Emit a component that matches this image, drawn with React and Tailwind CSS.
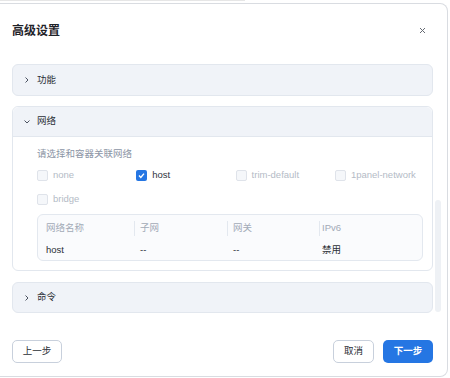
import React from "react";

const font = { fontFamily: '"Liberation Sans","Noto Sans CJK SC",sans-serif' };

function ChevronRight() {
  return (
    <svg width="6" height="8" viewBox="0 0 6 8" className="shrink-0">
      <polyline points="1.5,1.5 4,4 1.5,6.5" fill="none" stroke="#4b5260" strokeWidth="1" />
    </svg>
  );
}
function ChevronDown() {
  return (
    <svg width="8" height="6" viewBox="0 0 8 6" className="shrink-0">
      <polyline points="1.5,1.5 4,4 6.5,1.5" fill="none" stroke="#4b5260" strokeWidth="1" />
    </svg>
  );
}

function Check({ label, checked }) {
  return (
    <div className="w-[99.3px] flex items-center gap-[5px] h-[16px]">
      {checked ? (
        <div className="w-[11px] h-[11px] rounded-[2px] bg-[#2576e3] flex items-center justify-center">
          <svg width="9" height="9" viewBox="0 0 9 9">
            <polyline points="2,4.6 3.8,6.4 7,2.6" fill="none" stroke="#fff" strokeWidth="1.4" />
          </svg>
        </div>
      ) : (
        <div className="w-[11px] h-[11px] rounded-[2px] border border-[#dfe3ea] bg-[#f5f7fa]" />
      )}
      <span className={"text-[9.5px] leading-none whitespace-nowrap " + (checked ? "text-[#2f3440]" : "text-[#b4bbc6]")}>{label}</span>
    </div>
  );
}

export default function App() {
  return (
    <div className="w-[450px] h-[378px] bg-white overflow-hidden flex flex-col" style={font}>
      <div className="h-[3px] shrink-0">
        <div className="w-[245px] border-t border-[#e6e6e6]" />
      </div>
      <div className="w-[448px] h-[374px] border-y border-r border-[#d9dce1] rounded-r-[8px] bg-white flex flex-col">
        <div className="mt-[17px] h-[18px] flex items-center justify-between pl-[12px] pr-[21px]">
          <span className="text-[12px] font-semibold text-[#1f2329] leading-none" style={{ fontFamily: '"Noto Sans CJK SC",sans-serif' }}>高级设置</span>
          <svg width="7" height="7" viewBox="0 0 7 7">
            <path d="M1 1L6 6M6 1L1 6" stroke="#666b73" strokeWidth="1" />
          </svg>
        </div>
        <div className="mt-[25px] flex pl-[12px]">
          <div className="w-[421px] flex flex-col">
            <div className="h-[32px] border border-[#e2e7ee] bg-[#f0f3f8] rounded-[6px] flex items-center pl-[11px] gap-[7px]">
              <ChevronRight />
              <span className="text-[9.5px] text-[#2b2f36]">功能</span>
            </div>
            <div className="mt-[10px] border border-[#e2e7ee] rounded-[6px] flex flex-col">
              <div className="h-[30px] bg-[#f0f3f8] rounded-t-[6px] border-b border-[#e2e7ee] flex items-center pl-[10px] gap-[6px]">
                <ChevronDown />
                <span className="text-[9.5px] text-[#2b2f36]">网络</span>
              </div>
              <div className="pl-[24px] pr-[9px] pt-[10px] pb-[9px] flex flex-col">
                <div className="h-[14px] flex items-center text-[9.5px] text-[#8c95a5]">请选择和容器关联网络</div>
                <div className="mt-[6px] w-[398px] flex flex-wrap gap-y-[8px]">
                  <Check label="none" />
                  <Check label="host" checked />
                  <Check label="trim-default" />
                  <Check label="1panel-network" />
                  <Check label="bridge" />
                </div>
                <div className="mt-[7px] w-[386px] border border-[#e3e8ef] rounded-[6px] bg-[#fafbfd] flex flex-col text-[9.5px]">
                  <div className="h-[26px] flex items-center text-[#a2aab7]">
                    <div className="w-[96px] pl-[8px]">网络名称</div>
                    <div className="w-[93px] pl-[5px] border-l border-[#e3e8ef] h-[15px] flex items-center">子网</div>
                    <div className="w-[92px] pl-[5px] border-l border-[#e3e8ef] h-[15px] flex items-center">网关</div>
                    <div className="flex-1 pl-[2px] border-l border-[#e3e8ef] h-[15px] flex items-center">IPv6</div>
                  </div>
                  <div className="h-[19px] flex items-center text-[#2b2f36]">
                    <div className="w-[96px] pl-[8px]">host</div>
                    <div className="w-[93px] pl-[6px]">--</div>
                    <div className="w-[92px] pl-[6px]">--</div>
                    <div className="flex-1 pl-[3px]">禁用</div>
                  </div>
                </div>
              </div>
            </div>
            <div className="mt-[11px] h-[31px] border border-[#e2e7ee] bg-[#f0f3f8] rounded-[6px] flex items-center pl-[11px] gap-[7px]">
              <ChevronRight />
              <span className="text-[9.5px] text-[#2b2f36]">命令</span>
            </div>
          </div>
          <div className="ml-[2px] w-[6px]">
            <div className="mt-[136px] h-[112px] rounded-[3px] bg-[#eef1f5]" />
          </div>
        </div>
        <div className="flex-1" />
        <div className="pb-[13px] pl-[12px] pr-[14px] flex items-center">
          <div className="w-[50px] h-[23px] border border-[#c8d0dc] rounded-[5px] flex items-center justify-center text-[9.5px] text-[#2b2f36]">上一步</div>
          <div className="flex-1" />
          <div className="w-[41px] h-[23px] border border-[#c8d0dc] rounded-[5px] flex items-center justify-center text-[9.5px] text-[#2b2f36]">取消</div>
          <div className="ml-[9px] w-[50px] h-[23px] bg-[#2576e3] rounded-[5px] flex items-center justify-center text-[9.5px] font-semibold text-white">下一步</div>
        </div>
      </div>
    </div>
  );
}
